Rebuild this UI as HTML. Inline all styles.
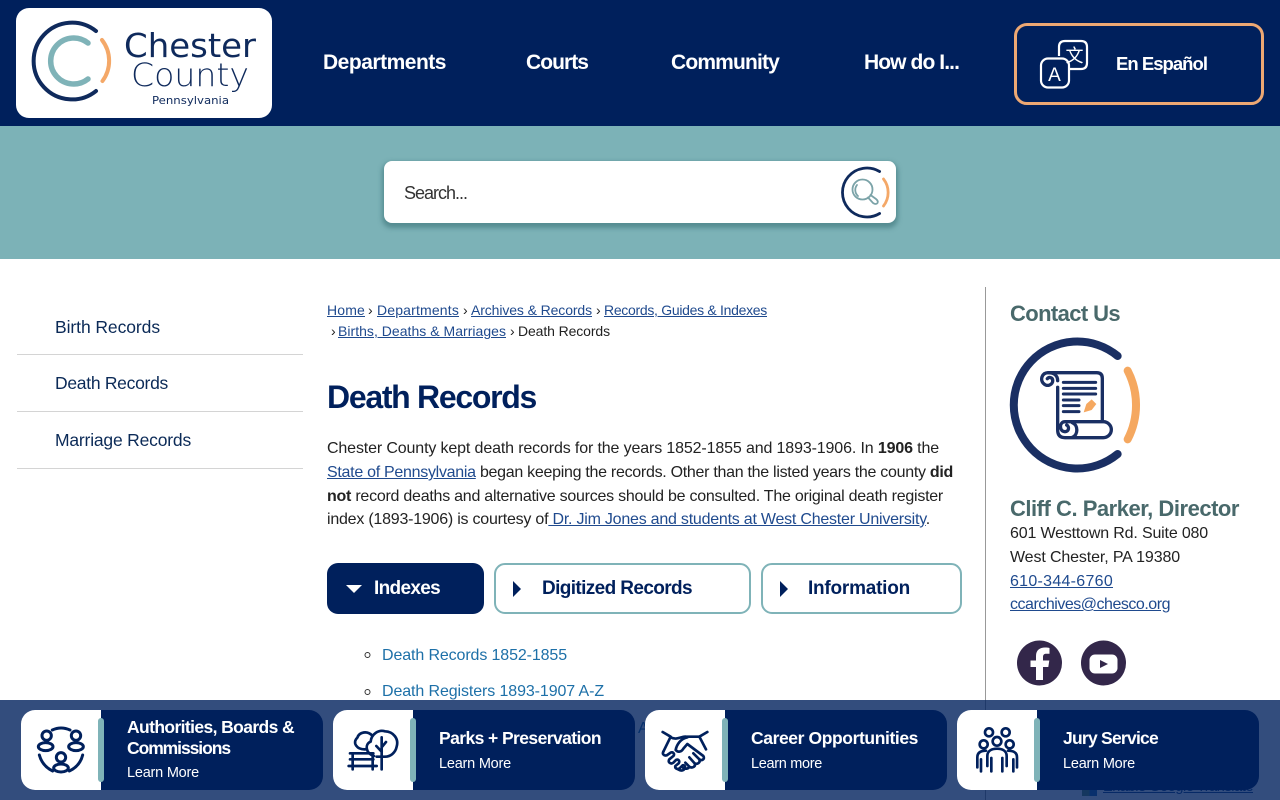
<!DOCTYPE html>
<html lang="en">
<head>
<meta charset="utf-8">
<title>Death Records - Chester County</title>
<style>
html,body{margin:0;padding:0;background:#fff;width:1280px;height:800px;overflow:hidden}
body{position:relative;font-family:"Liberation Sans",Arial,sans-serif;color:#222}
.t{position:absolute;white-space:nowrap;line-height:24px;display:block}
a{color:#1f4a8e;text-decoration:underline}
.box{position:absolute;box-sizing:border-box}
svg{position:absolute;overflow:visible}
.nav{font-weight:700;font-size:21px;color:#fff;line-height:24px}
.side{font-size:17.500px;color:#0b2a57}
.line{position:absolute;left:17px;width:286px;height:1px;background:#d4d4d4}
.bc{font-size:14px;color:#222}
.p{font-size:16px;color:#222}
.tab{font-weight:700;font-size:19px;color:#00205c}
.li{font-size:16px;color:#1d70a8}
.ct{font-size:16px;color:#222}
.hd{font-weight:700;font-size:22px;color:#49696b}
.card{position:absolute;top:710px;width:302px;height:80px;background:#00205c;border-radius:14px;overflow:hidden}
.card i{position:absolute;left:0;top:0;width:80px;height:80px;background:#fff}
.card b{position:absolute;left:77px;top:8px;width:6px;height:64px;background:#7fb3b8;border-radius:3px}
.ttl{font-weight:700;font-size:17.500px;color:#fff}
.lm{font-size:14.500px;color:#fff}
</style>
</head>
<body>

<!-- header -->
<div class="box" style="left:0;top:0;width:1280px;height:126px;background:#00205c"></div>
<div class="box" style="left:16px;top:8px;width:256px;height:110px;background:#fff;border-radius:13px"></div>
<svg style="left:0;top:0" width="300" height="126" fill="none" stroke-linecap="round">
  <path d="M96 31 A38.400 38.400 0 1 0 96 91" stroke="#0f2a5c" stroke-width="4"/>
  <path d="M88 43 A23 23 0 1 0 88 79" stroke="#7fb3b8" stroke-width="5.500"/>
  <path d="M102 40 A34 34 0 0 1 102.500 81" stroke="#f4a868" stroke-width="4"/>
  <text x="124" y="57" font-family="'DejaVu Sans',sans-serif" font-size="33" fill="#0f2a5c" stroke="none" textLength="132" lengthAdjust="spacingAndGlyphs">Chester</text>
  <text x="131" y="86" font-family="'DejaVu Sans',sans-serif" font-size="32" font-weight="200" fill="#0f2a5c" stroke="none" textLength="118" lengthAdjust="spacingAndGlyphs">County</text>
  <text x="152" y="104" font-family="'DejaVu Sans',sans-serif" font-size="10.500" fill="#0f2a5c" stroke="none" textLength="77" lengthAdjust="spacingAndGlyphs">Pennsylvania</text>
</svg>
<a class="t f nav" style="left:323px;top:51px;--w:123;text-decoration:none;color:#fff">Departments</a>
<a class="t f nav" style="left:526px;top:51px;--w:62;text-decoration:none;color:#fff">Courts</a>
<a class="t f nav" style="left:671px;top:51px;--w:108;text-decoration:none;color:#fff">Community</a>
<a class="t f nav" style="left:864px;top:51px;--w:95;text-decoration:none;color:#fff">How do I...</a>

<div class="box" style="left:1014px;top:23px;width:250px;height:82px;border:3px solid #eda873;border-radius:13px"></div>
<svg style="left:1000px;top:10px" width="100" height="100" fill="none" stroke="#fff" stroke-width="2.200">
  <g>
    <path d="M59 46 V37 Q59 31 65 31 H81 Q87 31 87 37 V53 Q87 59 81 59 H70"/>
    <rect x="41" y="48.500" width="28" height="29" rx="7"/>
    <text x="54.500" y="71" font-family="'Liberation Sans',sans-serif" font-size="19" fill="#fff" stroke="none" text-anchor="middle">A</text>
    <text x="74.500" y="52" font-family="'Liberation Sans','Noto Sans CJK SC',sans-serif" font-size="18" fill="#fff" stroke="none" text-anchor="middle">文</text>
  </g>
</svg>
<span class="t f" style="left:1116px;top:52px;--w:91;font-weight:700;font-size:18.500px;color:#fff">En Español</span>

<!-- search band -->
<div class="box" style="left:0;top:126px;width:1280px;height:133px;background:#7cb2b7"></div>
<div class="box" style="left:384px;top:161px;width:512px;height:62px;background:#fff;border-radius:8px;box-shadow:0 3px 5px 2px rgba(60,115,120,.6)"></div>
<span class="t f" style="left:404px;top:181px;--w:63;font-size:18px;color:#333">Search...</span>
<svg style="left:830px;top:159px" width="70" height="65" fill="none" stroke-linecap="round">
  <path d="M49.600 12.500 A24.500 24.500 0 1 0 49.600 54.500" stroke="#0f2a5c" stroke-width="2.800"/>
  <path d="M53.500 20 A22 22 0 0 1 53.500 47" stroke="#f4a868" stroke-width="2.800"/>
  <g stroke="#7ba3a8" stroke-width="1.800">
    <circle cx="32.500" cy="30.500" r="10"/>
    <path d="M27 26 A8 8 0 0 0 28 37"/>
    <path d="M38 38.500 L43 44 Q46 46 47.500 44 Q48.500 42 46 40 L40.500 36"/>
  </g>
</svg>

<!-- left nav -->
<a class="t f side" style="left:55px;top:315px;--w:105;text-decoration:none;color:#0b2a57">Birth Records</a>
<div class="line" style="top:354px"></div>
<a class="t f side" style="left:55px;top:371px;--w:113;text-decoration:none;color:#0b2a57">Death Records</a>
<div class="line" style="top:411px"></div>
<a class="t f side" style="left:55px;top:428px;--w:136;text-decoration:none;color:#0b2a57">Marriage Records</a>
<div class="line" style="top:468px"></div>

<!-- breadcrumb -->
<a class="t f bc" style="left:327px;top:298px;--w:38;color:#1f4a8e">Home</a>
<span class="t bc" style="left:368px;top:298px">›</span>
<a class="t f bc" style="left:377px;top:298px;--w:82;color:#1f4a8e">Departments</a>
<span class="t bc" style="left:463px;top:298px">›</span>
<a class="t f bc" style="left:471px;top:298px;--w:121;color:#1f4a8e">Archives &amp; Records</a>
<span class="t bc" style="left:596px;top:298px">›</span>
<a class="t f bc" style="left:604px;top:298px;--w:163;color:#1f4a8e">Records, Guides &amp; Indexes</a>
<span class="t bc" style="left:331px;top:319px">›</span>
<a class="t f bc" style="left:338px;top:319px;--w:168;color:#1f4a8e">Births, Deaths &amp; Marriages</a>
<span class="t bc" style="left:510px;top:319px">›</span>
<span class="t f bc" style="left:518px;top:319px;--w:92">Death Records</span>

<h1 class="t f" style="left:327px;top:377px;margin:0;--w:209;font-size:32px;line-height:40px;font-weight:700;color:#00205c">Death Records</h1>

<!-- paragraph -->
<span class="t f p" style="left:327px;top:437px;--w:612">Chester County kept death records for the years 1852-1855 and 1893-1906. In <b>1906</b> the</span>
<span class="t f p" style="left:327px;top:461px;--w:626"><a href="#">State of Pennsylvania</a> began keeping the records. Other than the listed years the county <b>did</b></span>
<span class="t f p" style="left:327px;top:485px;--w:616"><b>not</b> record deaths and alternative sources should be consulted. The original death register</span>
<span class="t f p" style="left:327px;top:508px;--w:603">index (1893-1906) is courtesy of<a href="#"> Dr. Jim Jones and students at West Chester University</a>.</span>

<!-- tabs -->
<div class="box" style="left:327px;top:563px;width:157px;height:51px;background:#00205c;border-radius:11px"></div>
<svg style="left:346px;top:585px" width="16" height="8"><path d="M0 0H16L8 8Z" fill="#fff"/></svg>
<span class="t f tab" style="left:374px;top:577px;--w:66;color:#fff">Indexes</span>

<div class="box" style="left:494px;top:563px;width:257px;height:51px;border:2px solid #7fb3b8;border-radius:11px;background:#fff"></div>
<svg style="left:513px;top:581px" width="8" height="16"><path d="M0 0L8 8L0 16Z" fill="#00205c"/></svg>
<span class="t f tab" style="left:542px;top:577px;--w:150">Digitized Records</span>

<div class="box" style="left:761px;top:563px;width:201px;height:51px;border:2px solid #7fb3b8;border-radius:11px;background:#fff"></div>
<svg style="left:780px;top:581px" width="8" height="16"><path d="M0 0L8 8L0 16Z" fill="#00205c"/></svg>
<span class="t f tab" style="left:808px;top:577px;--w:102">Information</span>

<!-- list -->
<svg style="left:360px;top:645px" width="16" height="60" fill="none" stroke="#333" stroke-width="1"><circle cx="7.500" cy="10" r="2.500"/><circle cx="7.500" cy="47" r="2.500"/></svg>
<a class="t f li" style="left:382px;top:644px;--w:185;text-decoration:none;color:#1d70a8">Death Records 1852-1855</a>
<a class="t f li" style="left:382px;top:680px;--w:222;text-decoration:none;color:#1d70a8">Death Registers 1893-1907 A-Z</a>
<span class="t li" style="left:638px;top:717px;color:#1d70a8">A</span>

<!-- right column -->
<div class="box" style="left:985px;top:287px;width:1px;height:513px;background:#999"></div>
<span class="t f hd" style="left:1010px;top:302px;--w:110">Contact Us</span>
<svg style="left:985px;top:330px" width="180" height="150" viewBox="0 0 540 450" fill="none" stroke-linecap="round" stroke-linejoin="round">
  <path d="M398 78 A190.500 190.500 0 1 0 398 372" stroke="#1a2f63" stroke-width="24"/>
  <path d="M428 122 A224 224 0 0 1 428 328" stroke="#f5a860" stroke-width="24"/>
  <g stroke="#1a2f63" stroke-width="10">
    <path d="M190 128 H335 Q352 128 352 145 V272"/>
    <path d="M218 172 V300 Q218 323 240 323 H355 A24 24 0 0 0 355 275 H240 C222 275 222 305 240 305 C252 305 254 290 245 285"/>
    <path d="M218 152 C218 135 205 128 190 128 C170 128 165 150 175 160 C185 172 205 165 203 150 C202 142 192 140 187 146"/>
    <path d="M235 157 H332 M235 175 H332 M235 192 H332 M235 210 H282 M235 227 H282 M235 245 H282" stroke-width="9"/>
    <path d="M262 278 C280 285 280 315 262 322"/>
  </g>
  <path d="M296 247 L304 222 L320 208 L334 222 L320 240 Z" fill="#f5a860"/>
</svg>
<span class="t f hd" style="left:1010px;top:497px;--w:229">Cliff C. Parker, Director</span>
<span class="t f ct" style="left:1010px;top:522px;--w:198">601 Westtown Rd. Suite 080</span>
<span class="t f ct" style="left:1010px;top:546px;--w:170">West Chester, PA 19380</span>
<a class="t f ct" style="left:1010px;top:570px;--w:103;color:#1f4a8e">610-344-6760</a>
<a class="t f ct" style="left:1010px;top:593px;--w:160;color:#1f4a8e">ccarchives@chesco.org</a>

<svg style="left:1010px;top:635px" width="125" height="56">
  <circle cx="29.500" cy="28" r="22.500" fill="#33274a"/>
  <path d="M26 45 V32 H20.500 V25.500 H26 V21 C26 15 30 12.500 35 12.500 C37 12.500 38.500 12.700 39.500 13 V18.700 H36.300 C33.800 18.700 33 20 33 22 V25.500 H39.300 L38.300 32 H33 V45 Z" fill="#fff"/>
  <circle cx="93.500" cy="28" r="22.500" fill="#33274a"/>
  <rect x="79.500" y="19.500" width="28" height="19" rx="5.500" fill="#fff"/>
  <path d="M90 25 L98 29 L90 33 Z" fill="#33274a"/>
</svg>

<!-- content under the bar -->
<a class="t f" style="left:1103px;top:775px;--w:150;font-size:14.500px;color:#1f4a8e">Enable Google Translate</a>
<div class="box" style="left:1082px;top:788px;width:15px;height:8px;background:linear-gradient(90deg,#6a8f6a 50%,#2d6fb0 50%)"></div>

<!-- bottom bar -->
<div class="box" style="left:0;top:700px;width:1280px;height:100px;background:rgba(0,32,92,.8)"></div>

<div class="card" style="left:21px"><i></i><b></b></div>
<div class="card" style="left:333px"><i></i><b></b></div>
<div class="card" style="left:645px"><i></i><b></b></div>
<div class="card" style="left:957px"><i></i><b></b></div>

<svg style="left:0;top:700px" width="330" height="100" viewBox="0 0 990 300" fill="none" stroke="#00205c" stroke-width="9" stroke-linecap="round">
  <circle cx="140" cy="107" r="14"/><ellipse cx="137" cy="140" rx="22" ry="12"/>
  <circle cx="228" cy="107" r="14"/><ellipse cx="228" cy="140" rx="22" ry="12"/>
  <circle cx="183" cy="172" r="14"/><ellipse cx="183" cy="204" rx="22" ry="12"/>
  <path d="M157 90 Q183 78 210 90"/>
  <path d="M118 165 Q127 198 158 213"/>
  <path d="M248 165 Q240 198 208 213"/>
</svg>

<svg style="left:330px;top:700px" width="320" height="100" viewBox="0 0 960 300" fill="none" stroke="#00205c" stroke-width="8" stroke-linecap="round" stroke-linejoin="round">
  <path d="M108 148 C80 150 66 128 82 113 C88 95 112 92 126 106"/>
  <path d="M132 168 C106 160 104 132 122 125 C124 102 146 88 165 94 C190 95 207 116 200 140 C196 160 180 170 165 170 H140"/>
  <path d="M155 112 V208 M139 138 L155 155 M155 142 L168 126"/>
  <path d="M60 160 H130 M60 178 H130 M56 198 H140 M68 160 V208 M128 160 V208"/>
</svg>

<svg style="left:640px;top:700px" width="320" height="100" viewBox="0 0 960 300" fill="none" stroke="#00205c" stroke-width="8" stroke-linecap="round" stroke-linejoin="round">
  <path d="M68 96 L92 110 L70 155 M202 96 L178 110 L198 148"/>
  <path d="M92 112 C110 122 125 108 138 110 L178 110"/>
  <path d="M142 112 C122 116 110 134 107 150 C114 158 124 156 130 146 L142 132 L190 168 C196 176 186 184 178 178 L160 160"/>
  <path d="M178 178 C182 188 172 194 164 190 L148 172 M164 190 C168 200 156 206 148 200 L136 188 M148 200 C146 206 138 208 130 204"/>
  <path d="M70 155 C66 162 72 168 80 166 L92 158 C98 154 106 162 100 168 L88 178 C82 186 92 194 100 188 L108 180 C116 176 120 184 116 190 L106 198 C104 206 114 210 120 204 L128 196 C136 194 138 204 130 210 C124 214 118 210 114 208"/>
</svg>

<svg style="left:950px;top:630px" width="330" height="170" viewBox="0 0 990 510" fill="none" stroke="#00205c" stroke-width="8" stroke-linecap="round" stroke-linejoin="round">
  <circle cx="117" cy="307" r="12"/><circle cx="167" cy="307" r="12"/>
  <circle cx="101" cy="343" r="12"/><circle cx="141" cy="334" r="13"/><circle cx="179" cy="343" r="12"/>
  <path d="M82 412 V382 C82 368 92 362 108 362"/>
  <path d="M201 412 V382 C201 368 192 362 174 362"/>
  <path d="M112 408 V378 C112 362 126 356 141 356 C156 356 170 362 170 378 V408"/>
  <path d="M93 424 V388 M190 424 V388 M124 424 V384 M157 424 V384"/>
</svg>

<span class="t f ttl" style="left:127px;top:715px;--w:167">Authorities, Boards &amp;</span>
<span class="t f ttl" style="left:127px;top:736px;--w:103">Commissions</span>
<span class="t f lm" style="left:127px;top:761px;--w:72">Learn More</span>
<span class="t f ttl" style="left:439px;top:726px;--w:162">Parks + Preservation</span>
<span class="t f lm" style="left:439px;top:752px;--w:72">Learn More</span>
<span class="t f ttl" style="left:751px;top:726px;--w:167">Career Opportunities</span>
<span class="t f lm" style="left:751px;top:752px;--w:71">Learn more</span>
<span class="t f ttl" style="left:1063px;top:726px;--w:95">Jury Service</span>
<span class="t f lm" style="left:1063px;top:752px;--w:72">Learn More</span>

<script>
document.querySelectorAll('.f').forEach(function(e){
  var w=parseFloat(getComputedStyle(e).getPropertyValue('--w'));
  var n=e.textContent.length;
  var c=e.getBoundingClientRect().width;
  e.style.letterSpacing=((w-c)/n)+'px';
});
</script>
</body>
</html>
